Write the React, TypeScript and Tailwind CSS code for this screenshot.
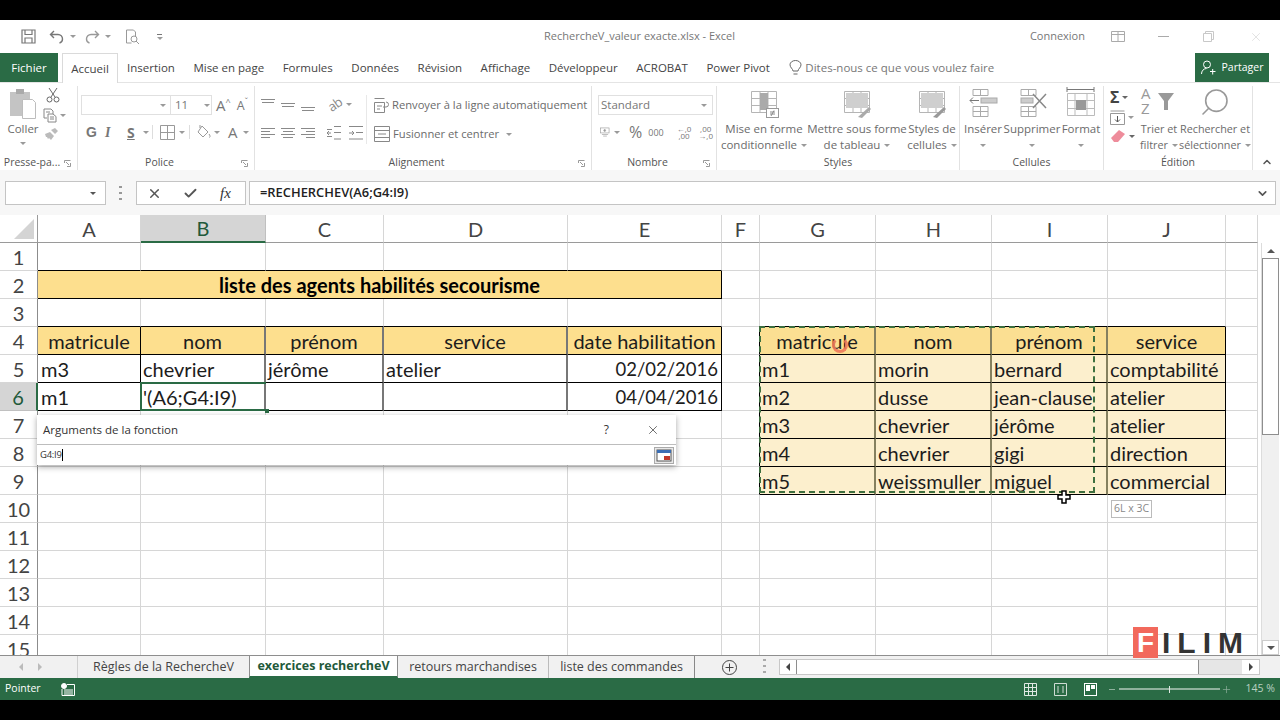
import { Check, ChevronDown, ChevronUp, Plus, Search, X } from "lucide-react";
import type { ReactNode } from "react";

const columns = ["A", "B", "C", "D", "E", "F", "G", "H", "I", "J", ""];
const rows = Array.from({ length: 15 }, (_, i) => i + 1);

const cells: Record<string, string> = {
  "4-0": "matricule", "4-1": "nom", "4-2": "prénom", "4-3": "service", "4-4": "date habilitation",
  "5-0": "m3", "5-1": "chevrier", "5-2": "jérôme", "5-3": "atelier", "5-4": "02/02/2016",
  "6-0": "m1", "6-1": "'(A6;G4:I9)", "6-4": "04/04/2016",
  "4-6": "matricule", "4-7": "nom", "4-8": "prénom", "4-9": "service",
  "5-6": "m1", "5-7": "morin", "5-8": "bernard", "5-9": "comptabilité",
  "6-6": "m2", "6-7": "dusse", "6-8": "jean-clause", "6-9": "atelier",
  "7-6": "m3", "7-7": "chevrier", "7-8": "jérôme", "7-9": "atelier",
  "8-6": "m4", "8-7": "chevrier", "8-8": "gigi", "8-9": "direction",
  "9-6": "m5", "9-7": "weissmuller", "9-8": "miguel", "9-9": "commercial",
};

const ribbonTabs = ["Insertion", "Mise en page", "Formules", "Données", "Révision", "Affichage", "Développeur", "ACROBAT", "Power Pivot"];

function Icon({ w, h, children, className }: { w: number; h: number; children: ReactNode; className?: string }) {
  return (
    <svg width={w} height={h} viewBox={`0 0 ${w} ${h}`} fill="none" stroke="#8a8a8a" strokeWidth={1} className={className}>
      {children}
    </svg>
  );
}

function Caret({ className = "" }: { className?: string }) {
  return <span className={`inline-block w-0 h-0 border-x-[3px] border-x-transparent border-t-[3px] border-t-[#9a9a9a] ${className}`} />;
}

function Lines({ kind }: { kind: "top" | "middle" | "bottom" | "left" | "center" | "right" }) {
  if (kind === "top" || kind === "middle" || kind === "bottom") {
    const y = kind === "top" ? 2 : kind === "middle" ? 6 : 10;
    return (
      <Icon w={14} h={14}>
        <path d={`M0 ${y + 0.5}h14M1 ${y + 3.5}h12`} />
      </Icon>
    );
  }
  const short = kind === "left" ? "M0 5.5h9M0 11.5h9" : kind === "center" ? "M2 5.5h10M2 11.5h10" : "M5 5.5h9M5 11.5h9";
  return (
    <Icon w={14} h={14}>
      <path d={`M0 2.5h14M0 8.5h14${short}`} />
    </Icon>
  );
}

function BigButton({ lines, width, icon, caretOnly, small }: { lines: string[]; width: string; icon: ReactNode; caretOnly?: boolean; small?: boolean }) {
  return (
    <div className={`flex flex-col items-center ${width}`}>
      <div className="h-[32px] flex items-end">{icon}</div>
      <div className={`mt-[3px] ${small ? "text-[10.8px]" : "text-[11.5px]"} leading-[16px] text-[#6b6b6b] text-center whitespace-nowrap`}>
        <div>{lines[0]}</div>
        <div className="flex items-center justify-center gap-1 h-4">
          {lines[1]}
          {(lines[1] || caretOnly) && <Caret />}
        </div>
      </div>
    </div>
  );
}

function Group({ label, width, launcher, children }: { label: string; width: string; launcher?: boolean; children: ReactNode }) {
  return (
    <div className={`${width} shrink-0 h-[84px] border-r border-[#e2e2e2] flex flex-col`}>
      <div className="flex-1 min-h-0">{children}</div>
      <div className="h-[14px] flex items-center text-[10.5px] text-[#555]">
        <span className="flex-1 text-center whitespace-nowrap">{label}</span>
        {launcher && (
          <svg width="7" height="7" viewBox="0 0 7 7" fill="none" stroke="#999" className="mr-[6px]">
            <path d="M0.5 3V0.5H6.5M6.5 3v3.5H3M2 2l3 3" />
          </svg>
        )}
      </div>
    </div>
  );
}

function TableIcon({ fill, deco }: { fill?: boolean; deco?: ReactNode }) {
  return (
    <Icon w={30} h={30}>
      <path d="M2.5 3.5h25v21h-25zM2.5 10.5h25M2.5 17.5h25M11 3.5v21M19 3.5v21" stroke="#b5b5b5" />
      {fill && <rect x="4" y="5" width="22" height="15" fill="#cfcfcf" stroke="none" />}
      {deco}
    </Icon>
  );
}

function cellClass(r: number, c: number) {
  let right = "border-r border-r-[#d6d6d6]";
  let bottom = "border-b border-b-[#d6d6d6]";
  let fill = "";
  if (r >= 4 && r <= 6 && c <= 4) {
    right = c === 0 || c === 4 ? "border-r border-r-black" : "border-r-2 border-r-[#777]";
  }
  if (r >= 3 && r <= 6 && c <= 4) bottom = "border-b border-b-black";
  if (r >= 4 && r <= 9 && c === 5) right = "border-r border-r-black";
  if (r >= 4 && r <= 9 && c >= 6 && c <= 8) right = "border-r-2 border-r-[#85805f]";
  if (r >= 4 && r <= 9 && c === 9) right = "border-r border-r-black";
  if (r >= 3 && r <= 9 && c >= 6 && c <= 9) bottom = "border-b border-b-black";
  if (r === 1 && c <= 4) bottom = "border-b border-b-black";
  if (r === 4 && c <= 4) fill = "bg-[#fddf8e]";
  if (r === 4 && c >= 6 && c <= 9) fill = "bg-[#fbdf92]";
  if (r >= 5 && r <= 9 && c >= 6 && c <= 9) fill = "bg-[#fcefcd]";
  return `${right} ${bottom} ${fill}`;
}

function Sheet() {
  return (
    <div className="w-[1258px] h-[440px] overflow-hidden bg-white font-['Lato',sans-serif]">
      <div className="grid grid-cols-[38px_103px_125px_118px_184px_154px_38px_116px_116px_116px_118px_32px] auto-rows-[28px] text-[20px] text-[#1c1c1c]">
        <div className="border-r border-b border-[#9a9a9a] relative bg-white">
          <span className="absolute right-[3px] bottom-[3px] w-0 h-0 border-l-[20px] border-l-transparent border-b-[20px] border-b-[#d4d4d4]" />
        </div>
        {columns.map((name, i) => (
          <div
            key={i}
            className={
              i === 1
                ? "flex items-center justify-center bg-[#d5d5d5] border-r border-r-[#c0c0c0] border-b-2 border-b-[#2a6b45] text-[#22593a]"
                : "flex items-center justify-center bg-white border-r border-r-[#d6d6d6] border-b border-b-[#9a9a9a] text-[#444]"
            }
          >
            {name}
          </div>
        ))}
        {rows.map((r) => (
          <div key={r} className="contents">
            <div
              className={
                r === 6
                  ? "flex items-center justify-center bg-[#d5d5d5] border-r-2 border-r-[#2a6b45] border-b border-b-[#c0c0c0] text-[#22593a]"
                  : "flex items-center justify-center border-r border-r-[#8c8c8c] border-b border-b-[#d6d6d6] text-[#444]"
              }
            >
              {r}
            </div>
            {r === 2 ? (
              <>
                <div className="col-span-5 flex items-center justify-center bg-[#fddf8e] border-r border-r-black border-b border-b-black font-bold text-black">
                  liste des agents habilités secourisme
                </div>
                {columns.slice(5).map((_, i) => (
                  <div key={i} className={cellClass(r, i + 5)} />
                ))}
              </>
            ) : (
              columns.map((_, c) => {
                const text = cells[`${r}-${c}`];
                const isDate = !!text && text.endsWith("/2016");
                const align =
                  r === 4
                    ? "justify-center"
                    : isDate
                      ? "justify-end pr-[3px] pt-[2px] text-[18.5px]"
                      : c === 0
                        ? "justify-start pl-[3px]"
                        : "justify-start pl-[2px]";
                return (
                  <div key={c} className={`flex items-center whitespace-nowrap overflow-hidden ${align} ${cellClass(r, c)}`}>
                    {text}
                  </div>
                );
              })
            )}
          </div>
        ))}
      </div>
    </div>
  );
}

export default function App() {
  return (
    <div className="relative w-[1280px] h-[720px] overflow-hidden bg-black flex flex-col font-['Open_Sans',sans-serif]">
      <div className="h-5 shrink-0" />

      {/* title bar */}
      <div className="h-[33px] shrink-0 bg-white flex items-center relative text-[11px] text-[#777]">
        <div className="flex items-center ml-[21px]">
          <svg width="15" height="15" viewBox="0 0 15 15" fill="none" stroke="#777" strokeWidth="1.2">
            <path d="M1 1h13v13H1zM4 1v4.5h7V1M4 14V9h7v5" />
          </svg>
          <svg width="16" height="14" viewBox="0 0 16 14" fill="none" stroke="#777" strokeWidth="1.4" className="ml-[13px]">
            <path d="M5 1L1.5 4.5 5 8M2 4.5h7a4.5 4.5 0 0 1 4.5 4.5c0 2-1 3.5-3 4" />
          </svg>
          <Caret className="ml-[5px]" />
          <svg width="16" height="14" viewBox="0 0 16 14" fill="none" stroke="#999" strokeWidth="1.4" className="ml-[8px]">
            <path d="M11 1l3.5 3.5L11 8M14 4.5H7A4.5 4.5 0 0 0 2.5 9c0 2 1 3.5 3 4" />
          </svg>
          <Caret className="ml-[5px]" />
          <svg width="15" height="16" viewBox="0 0 15 16" fill="none" stroke="#999" className="ml-[14px]">
            <path d="M1.5 1h7l2 2v4M1.5 1v13h5" />
            <circle cx="9" cy="10" r="3" />
            <path d="M11 12l3 3" />
          </svg>
          <span className="ml-[17px] w-[5px] border-t border-[#777] pt-[2px] flex justify-center">
            <Caret />
          </span>
        </div>
        <span className="absolute left-[544px] whitespace-nowrap">RechercheV_valeur exacte.xlsx - Excel</span>
        <div className="ml-auto flex items-center">
          <span>Connexion</span>
          <svg width="14" height="11" viewBox="0 0 14 11" fill="none" stroke="#aaa" className="ml-[26px]">
            <path d="M.5.5h13v10H.5zM.5 3.5h13M7 .5v10" />
          </svg>
          <span className="ml-[33px] w-[11px] h-px bg-[#aaa]" />
          <svg width="11" height="11" viewBox="0 0 11 11" fill="none" stroke="#c8c8c8" className="ml-[34px]">
            <path d="M.5 2.5h8v8h-8zM2.5 2.5v-2h8v8h-2" />
          </svg>
          <X size={14} strokeWidth={1} color="#cfcfcf" className="ml-[35px] mr-[17px]" />
        </div>
      </div>

      {/* ribbon tabs */}
      <div className="h-[30px] shrink-0 bg-white flex items-stretch text-[11.5px] text-[#444] border-b border-[#e4e4e4]">
        <div className="w-[58px] bg-[#2a6b45] text-white flex items-center justify-center">Fichier</div>
        <div className="ml-1 w-[56px] bg-white border-x border-t border-[#dadada] flex items-center justify-center h-[30px]">Accueil</div>
        <div className="flex items-center gap-[18.5px] ml-[9px] whitespace-nowrap pt-px">
          {ribbonTabs.map((t) => (
            <span key={t}>{t}</span>
          ))}
          <span className="flex items-center gap-[3px] text-[#777]">
            <svg width="13" height="16" viewBox="0 0 13 16" fill="none" stroke="#666" className="ml-[1px]">
              <path d="M4 11c0-2-3-3.500-3-6.200a5.500 4.300 0 0 1 11 0C12 7.500 9 9 9 11zM4.500 14h4" />
            </svg>
            Dites-nous ce que vous voulez faire
          </span>
        </div>
        <div className="ml-auto mr-[11px] w-[74px] bg-[#2a6b45] text-white text-[10.5px] flex items-center justify-center gap-[6px] h-[29px]">
          <svg width="15" height="15" viewBox="0 0 15 15" fill="none" stroke="#fff">
            <circle cx="6" cy="4.500" r="3.500" />
            <path d="M.5 14c0-3 2-5.500 5-5.500M9 11.500h5.500M11.700 9v5.500" />
          </svg>
          Partager
        </div>
      </div>

      {/* ribbon */}
      <div className="h-[87px] shrink-0 bg-white flex pt-[3px]">
        <Group label="Presse-pa..." width="w-[78px]" launcher>
          <div className="flex pl-[8px] pt-[2px]">
            <div className="w-[30px] flex flex-col items-center">
              <svg width="28" height="32" viewBox="0 0 28 32" fill="none">
                <rect x="1" y="4" width="20" height="24" fill="#c4c4c4" />
                <rect x="7" y="1" width="8" height="5" fill="#aaa" />
                <path d="M13.500 11.500h10l3 3v16h-13z" fill="#fff" stroke="#bdbdbd" />
              </svg>
              <span className="text-[11.5px] leading-[16px] text-[#6b6b6b] mt-[1px]">Coller</span>
              <Caret className="mt-[5px]" />
            </div>
            <div className="ml-[5px] flex flex-col items-start gap-[5px]">
              <svg width="14" height="15" viewBox="0 0 14 15" fill="none" stroke="#666" className="ml-[3px]">
                <path d="M3 0l6 9M11 0L5 9" />
                <circle cx="3.500" cy="11.500" r="2.500" />
                <circle cx="10.500" cy="11.500" r="2.500" />
              </svg>
              <span className="flex items-center gap-[2px]">
                <svg width="14" height="15" viewBox="0 0 14 15" fill="none" stroke="#888">
                  <path d="M1 1h7l2 2v3M1 1v9h3M5 6h5l3 2.500V14H5zM3 4h4M7 9h4M7 11h4" />
                </svg>
                <Caret className="ml-[1px]" />
              </span>
              <svg width="14" height="12" viewBox="0 0 14 12" className="ml-[1px]">
                <path d="M7 2l4-2 3 3-3 3zM1 6l5-2 4 4-3 4-2-2-1 1-1-2-1 0z" fill="#bbb" />
              </svg>
            </div>
          </div>
        </Group>

        <Group label="Police" width="w-[177px]" launcher>
          <div className="pl-[3px] pt-[9px]">
            <div className="flex items-center">
              <div className="w-[90px] h-[20px] border border-[#e0e0e0] flex items-center justify-end pr-1">
                <Caret />
              </div>
              <div className="w-[41px] h-[20px] border border-l-0 border-[#e0e0e0] flex items-center pl-1 text-[11.5px] text-[#777]">
                11
                <Caret className="ml-auto mr-[1px]" />
              </div>
              <span className="ml-[4px] text-[15px] leading-none text-[#777]">A</span>
              <span className="text-[9px] leading-none text-[#777] mb-2">^</span>
              <span className="ml-[6px] text-[12.500px] leading-none text-[#777] mt-[2px]">A</span>
              <span className="text-[9px] leading-none text-[#777] mb-2">ˇ</span>
            </div>
            <div className="flex items-center mt-[9px] text-[#777] text-[14px] h-4">
              <span className="ml-[5px] w-[19px] font-bold font-['Liberation_Sans',sans-serif]">G</span>
              <span className="w-[22px] italic font-bold font-['Liberation_Serif',serif]">I</span>
              <span className="w-[14px] font-bold underline">S</span>
              <Caret className="ml-[2px]" />
              <span className="ml-[3px] w-px h-[14px] bg-[#ddd]" />
              <svg width="15" height="15" viewBox="0 0 15 15" fill="none" stroke="#999" className="ml-[7px]">
                <path d="M.5.500h14v14H.5zM7.500.500v14M.5 7.500h14" />
              </svg>
              <Caret className="ml-[4px]" />
              <span className="ml-[4px] w-px h-[14px] bg-[#ddd]" />
              <svg width="14" height="14" viewBox="0 0 14 14" fill="none" stroke="#999" className="ml-[7px]">
                <path d="M5 1l6 6-5 5-5-5zM3 3V0M12 9c1 1.500 1.500 2.500.5 3.500" />
              </svg>
              <Caret className="ml-[3px]" />
              <span className="ml-[8px] text-[15px] leading-none">A</span>
              <Caret className="ml-[5px]" />
            </div>
          </div>
        </Group>

        <Group label="Alignement" width="w-[337px]" launcher>
          <div className="flex pt-[9px] pl-[6px]">
            <div className="flex flex-col gap-[11px]">
              <div className="flex gap-[6px] items-center h-[18px]">
                <Lines kind="top" />
                <Lines kind="middle" />
                <Lines kind="bottom" />
                <span className="ml-[7px] text-[13px] leading-none text-[#888] rotate-[-35deg] tracking-tighter">ab</span>
                <Caret className="ml-[-2px]" />
              </div>
              <div className="flex gap-[6px] items-center h-[18px]">
                <Lines kind="left" />
                <Lines kind="center" />
                <Lines kind="right" />
                <svg width="36" height="14" viewBox="0 0 36 14" fill="none" stroke="#888" className="ml-[6px]">
                  <path d="M0 3.500h5M0 10.500h5M7 .5h7M7 6.500h7M7 13h7M4 7H0M2 5L0 7l2 2" />
                  <path d="M22 .5h14M29 6.500h7M22 13h14M22 7h5M25 5l2 2-2 2" />
                </svg>
              </div>
            </div>
            <div className="ml-[3px] border-l border-[#e8e8e8] pl-[7px] flex flex-col gap-[9px] text-[11.2px] text-[#6b6b6b] whitespace-nowrap">
              <div className="flex items-center gap-[3px] h-[20px]">
                <svg width="15" height="15" viewBox="0 0 15 15" fill="none" stroke="#888">
                  <path d="M.5.5h10M.5 4.500h10v10H.5zM3 8h5M3 11h3M9 9h3a2 2 0 0 0 0-5" />
                </svg>
                Renvoyer à la ligne automatiquement
              </div>
              <div className="flex items-center gap-[3px] h-[20px]">
                <svg width="16" height="16" viewBox="0 0 16 16" fill="none" stroke="#888">
                  <path d="M.5.500h15v15H.5zM.5 4.500h15M.5 11.500h15M4 8h8" />
                </svg>
                Fusionner et centrer
                <Caret className="ml-[4px]" />
              </div>
            </div>
          </div>
        </Group>

        <Group label="Nombre" width="w-[125px]" launcher>
          <div className="pl-[6px] pt-[9px] pr-[3px]">
            <div className="h-[20px] border border-[#e0e0e0] flex items-center pl-[2px] pr-[5px] text-[11.5px] text-[#777]">
              Standard
              <Caret className="ml-auto" />
            </div>
            <div className="flex items-center mt-[7px] text-[#777] h-5">
              <svg width="16" height="16" viewBox="0 0 16 16" fill="none" stroke="#999" className="ml-[2px]">
                <rect x=".5" y="1.500" width="14" height="8" />
                <circle cx="7.500" cy="5.500" r="1.500" fill="#999" />
                <path d="M3 12h10M5 14.500h6" />
              </svg>
              <Caret className="ml-[4px]" />
              <span className="ml-[9px] text-[16px] leading-none">%</span>
              <span className="ml-[6px] text-[9px] leading-none">000</span>
              <span className="ml-[13px] text-[8px] leading-[7px] text-center">←,0<br />,00</span>
              <span className="ml-[7px] text-[8px] leading-[7px] text-center">,00<br />→,0</span>
            </div>
          </div>
        </Group>

        <Group label="Styles" width="w-[243px]">
          <div className="flex">
            <BigButton
              width="w-[94px] shrink-0"
              lines={["Mise en forme", "conditionnelle"]}
              icon={<TableIcon deco={<><rect x="11" y="5" width="8" height="17" fill="#aaa" stroke="none" /><rect x="17.500" y="20.500" width="12" height="9" fill="#fff" stroke="#999" /><path d="M21 24h5M21 26h5M25 22.500l-3 5.500" /></>} />}
            />
            <BigButton
              width="w-[92px] shrink-0"
              lines={["Mettre sous forme", "de tableau"]}
              icon={<TableIcon fill deco={<path d="M16 29l11-10 2 2-9 9z" fill="#aaa" stroke="none" />} />}
            />
            <BigButton
              width="w-[58px] shrink-0"
              lines={["Styles de", "cellules"]}
              icon={<TableIcon fill deco={<path d="M16 29l11-10 2 2-9 9z" fill="#999" stroke="none" />} />}
            />
          </div>
        </Group>

        <Group label="Cellules" width="w-[144px]">
          <div className="flex pl-[3px]">
            <BigButton
              width="w-[40px] shrink-0"
              caretOnly
              lines={["Insérer", ""]}
              icon={
                <Icon w={30} h={30}>
                  <path d="M5 1.500h15v6H5zM12.500 1.500v6M5 18.500h15v10H5zM5 23.500h15M12.500 18.500v10" stroke="#aaa" />
                  <rect x="13" y="10" width="16" height="5" fill="#ccc" stroke="#aaa" />
                  <path d="M2 12.500h9M5 9.500l-3 3 3 3" stroke="#777" />
                </Icon>
              }
            />
            <BigButton
              width="w-[58px] shrink-0"
              caretOnly
              lines={["Supprimer", ""]}
              icon={
                <Icon w={32} h={30}>
                  <path d="M5 1.500h15v6H5zM12.500 1.500v6M5 18.500h15v10H5zM5 23.500h15M12.500 18.500v10" stroke="#aaa" />
                  <rect x="5" y="10" width="12" height="5" fill="#ccc" stroke="#aaa" />
                  <path d="M17 6l13 14M30 6L17 20" stroke="#888" strokeWidth="1.500" />
                </Icon>
              }
            />
            <BigButton
              width="w-[40px] shrink-0"
              caretOnly
              lines={["Format", ""]}
              icon={
                <Icon w={30} h={32}>
                  <path d="M1 3.500h27M1 1v5M28 1v5M4 3.500h3M22 3.500h3" stroke="#777" />
                  <path d="M1.500 7.500h27v22h-27zM1.500 14.500h27M1.500 22.500h27M9 7.500v22M21 7.500v22" stroke="#bbb" />
                  <rect x="10" y="14" width="10" height="10" fill="#999" stroke="none" />
                </Icon>
              }
            />
          </div>
        </Group>

        <Group label="Édition" width="w-[149px]">
          <div className="flex pl-[6px]">
            <div className="flex flex-col items-start w-[27px] pt-[3px] gap-[4px]">
              <span className="flex items-center gap-[3px] text-[16px] leading-[17px] text-[#444] font-bold">
                Σ<Caret className="border-t-[#666]" />
              </span>
              <span className="flex items-center gap-[3px]">
                <svg width="15" height="15" viewBox="0 0 15 15" fill="none" stroke="#999">
                  <path d="M.5 1h14M.5 3.500h14v11H.5z" />
                  <path d="M7.500 6v6M5 9.500l2.500 2.500L10 9.500" stroke="#555" />
                </svg>
                <Caret />
              </span>
              <span className="flex items-center gap-[3px]">
                <svg width="16" height="14" viewBox="0 0 16 14">
                  <path d="M1 9l8-8 6 4-7 8H4z" fill="#ee8c9b" />
                </svg>
                <Caret className="border-t-[#666]" />
              </span>
            </div>
            <BigButton
              small
              width="w-[44px] shrink-0"
              lines={["Trier et", "filtrer"]}
              icon={
                <div className="w-[36px] h-[32px] flex items-start text-[#999] text-[15px] leading-[15px]">
                  <div className="flex flex-col">
                    <span>A</span>
                    <span>Z</span>
                  </div>
                  <svg width="16" height="18" viewBox="0 0 16 18" className="mt-[7px] ml-[7px]">
                    <path d="M0 0h16L10 8v9H6V8z" fill="#999" />
                  </svg>
                </div>
              }
            />
            <BigButton
              small
              width="w-[68px] shrink-0"
              lines={["Rechercher et", "sélectionner"]}
              icon={<Search size={32} strokeWidth={1.2} color="#999" className="-scale-x-100" />}
            />
          </div>
        </Group>

        <div className="flex-1 flex items-end justify-center pb-[2px]">
          <ChevronUp size={12} strokeWidth={3} color="#555" />
        </div>
      </div>

      {/* formula bar */}
      <div className="h-[45px] shrink-0 bg-[#f7f7f7] pt-[11px] flex items-start">
        <div className="ml-[5px] w-[101px] h-[24px] bg-white border border-[#c4c4c4] flex items-center justify-end pr-[9px]">
          <Caret className="border-t-[#555]" />
        </div>
        <div className="ml-[13px] w-[3px] h-[14px] mt-[5px] flex flex-col justify-between">
          <span className="h-[2px] bg-[#999]" />
          <span className="h-[2px] bg-[#999]" />
          <span className="h-[2px] bg-[#999]" />
        </div>
        <div className="ml-[14px] w-[110px] h-[24px] bg-white border border-[#c4c4c4] flex items-center text-[#555]">
          <X size={15} strokeWidth={2.4} className="ml-[10px]" />
          <Check size={15} strokeWidth={3} className="ml-[21px]" />
          <span className="ml-[22px] italic font-['Liberation_Serif',serif] text-[15px] leading-none text-[#333]">fx</span>
        </div>
        <div className="ml-[3px] w-[1027px] h-[24px] bg-white border border-[#c4c4c4] flex items-center pl-[10px] pr-[6px] text-[12.9px] font-semibold text-[#222]">
          =RECHERCHEV(A6;G4:I9)
          <ChevronDown size={13} strokeWidth={3} color="#555" className="ml-auto" />
        </div>
      </div>

      {/* sheet + vertical scrollbar */}
      <div className="h-[440px] shrink-0 flex bg-white">
        <Sheet />
        <div className="flex-1 flex flex-col pt-[28px]">
          <div className="flex-1 ml-[3px] mr-[1px] bg-[#f0f0f0] flex flex-col border-l border-[#dcdcdc]">
            <div className="h-[15px] bg-white flex items-center justify-center">
              <span className="w-0 h-0 border-x-[4px] border-x-transparent border-b-[4px] border-b-[#555]" />
            </div>
            <div className="h-[177px] bg-white border border-[#8e8e8e]" />
            <div className="flex-1" />
            <div className="h-[15px] bg-white border border-[#ccc] flex items-center justify-center">
              <span className="w-0 h-0 border-x-[4px] border-x-transparent border-t-[4px] border-t-[#555]" />
            </div>
          </div>
        </div>
      </div>

      {/* sheet tabs */}
      <div className="h-[23px] shrink-0 bg-[#f1f1f1] border-t border-[#8e8e8e] flex items-stretch text-[12.500px] text-[#444] whitespace-nowrap">
        <div className="w-[78px] flex items-center pl-[19px] gap-[15px] border-r border-[#d0d0d0]">
          <span className="w-0 h-0 border-y-[4px] border-y-transparent border-r-[4px] border-r-[#bbb]" />
          <span className="w-0 h-0 border-y-[4px] border-y-transparent border-l-[4px] border-l-[#bbb]" />
        </div>
        <div className="w-[171px] flex items-center justify-center">Règles de la RechercheV</div>
        <div className="w-[149px] flex items-center justify-center bg-white border-x border-[#8e8e8e] border-b-2 border-b-[#2a6b45] font-bold text-[#22593a]">
          exercices rechercheV
        </div>
        <div className="w-[151px] flex items-center justify-center border-r border-[#bbb]">retours marchandises</div>
        <div className="w-[146px] flex items-center justify-center border-r border-[#888]">liste des commandes</div>
        <div className="w-[68px] flex items-center justify-center">
          <svg width="15" height="15" viewBox="0 0 15 15" fill="none" stroke="#444">
            <circle cx="7.500" cy="7.500" r="7" />
            <path d="M7.500 3.500v8M3.500 7.500h8" />
          </svg>
        </div>
        <div className="w-[3px] h-[14px] mt-[3px] flex flex-col justify-between">
          <span className="h-[2px] bg-[#aaa]" />
          <span className="h-[2px] bg-[#aaa]" />
          <span className="h-[2px] bg-[#aaa]" />
        </div>
        <div className="ml-[13px] my-[3px] w-[481px] flex bg-[#e6e6e6] border border-[#c8c8c8]">
          <div className="w-[16px] bg-white flex items-center justify-center">
            <span className="w-0 h-0 border-y-[4px] border-y-transparent border-r-[4px] border-r-[#444]" />
          </div>
          <div className="w-[403px] bg-white border-x border-[#8e8e8e]" />
          <div className="flex-1" />
          <div className="w-[17px] bg-white flex items-center justify-center">
            <span className="w-0 h-0 border-y-[4px] border-y-transparent border-l-[4px] border-l-[#444]" />
          </div>
        </div>
      </div>

      {/* status bar */}
      <div className="h-[22px] shrink-0 bg-[#2a6b45] flex items-center text-[10.5px] text-white">
        <span className="ml-[5px]">Pointer</span>
        <svg width="14" height="13" viewBox="0 0 14 13" fill="none" stroke="#fff" className="ml-[20px]">
          <circle cx="3" cy="3" r="2.500" fill="#fff" />
          <path d="M6 1.500h7.500V12.500H1V6M3 7h9M3 9h9M3 11h9" />
        </svg>
        <div className="ml-auto flex items-center">
          <svg width="13" height="13" viewBox="0 0 13 13" fill="none" stroke="#dfe9e3">
            <path d="M.5.500h12v12H.5zM4.500.500v12M8.500.500v12M.5 4.500h12M.5 8.500h12" />
          </svg>
          <svg width="13" height="13" viewBox="0 0 13 13" fill="none" stroke="#cfdcd4" className="ml-[17px]">
            <path d="M.5.500h12v12H.5zM4 3v7M9 3v7" />
          </svg>
          <svg width="13" height="13" viewBox="0 0 13 13" className="ml-[17px]">
            <rect x=".5" y=".5" width="12" height="12" fill="none" stroke="#fff" />
            <path d="M2 2h4v6H2zM7 2h4v4H7z" fill="#fff" />
          </svg>
          <span className="ml-[12px] w-[6px] h-px bg-[#8fb19d]" />
          <div className="ml-[4px] w-[101px] h-[2px] bg-[#8fb19d] flex justify-center items-center">
            <span className="w-px h-[7px] bg-[#dfe9e3]" />
          </div>
          <Plus size={11} strokeWidth={1.5} color="#8fb19d" className="ml-[1px]" />
          <span className="ml-[14px] mr-[5px] text-[#b9d0c2]">145 %</span>
        </div>
      </div>
      <div className="h-5 shrink-0" />

      {/* things that lie over the sheet */}
      <div className="absolute left-[265px] top-[409px] w-[4px] h-[4px] bg-[#2a6b45]" />
      <div className="absolute left-[140px] top-[382px] w-[126px] h-[29px] border-2 border-[#2a6b45] border-r-0" />
      <div className="absolute left-[759px] top-[326px] w-[336px] h-[167px] border-2 border-dashed border-[#3d6f3f]" />
      <div className="absolute left-[832px] top-[337px] w-[16px] h-[16px] rounded-full border-[3px] border-[#ee7a5a] border-t-transparent opacity-90" />

      <div className="absolute left-[37px] top-[415px] w-[639px] h-[50px] bg-white shadow-[0_2px_6px_rgba(0,0,0,0.35)] flex flex-col">
        <div className="h-[30px] border-b border-[#bdbdbd] flex items-center pl-[6px] text-[11.500px] text-[#333]">
          Arguments de la fonction
          <span className="ml-auto text-[12px]">?</span>
          <X size={14} strokeWidth={1.2} className="ml-[37px] mr-[16px]" />
        </div>
        <div className="flex-1 flex items-center pl-[3px] pr-[2px] text-[9.500px] text-[#333] tracking-tight">
          G4:I9
          <span className="w-px h-[12px] bg-black" />
          <div className="ml-auto w-[20px] h-[17px] bg-[#e8e8e8] border border-[#aaa] flex items-center justify-center">
            <svg width="16" height="13" viewBox="0 0 16 13">
              <rect x="1" y="1" width="14" height="11" fill="#fff" stroke="#555" />
              <rect x="1" y="1" width="14" height="3" fill="#3c6eb4" />
              <rect x="8" y="7" width="6" height="4" fill="#c0392b" />
            </svg>
          </div>
        </div>
      </div>

      <svg width="14" height="14" viewBox="0 0 14 14" className="absolute left-[1057px] top-[490px]">
        <path d="M5 1h4v4h4v4H9v4H5V9H1V5h4z" fill="#fff" stroke="#000" strokeWidth="1.500" />
      </svg>

      <div className="absolute left-[1111px] top-[500px] w-[41px] h-[18px] bg-white border border-[#bbb] flex items-center justify-center text-[10.500px] text-[#888]">
        6L x 3C
      </div>

      <div className="absolute left-[1133px] top-[627px] flex items-stretch h-[31px] font-['Liberation_Sans',sans-serif] font-bold leading-[31px]">
        <span className="w-[25px] bg-[#f2695c] text-white text-center text-[28px]">F</span>
        <span className="ml-[4px] text-[#333] tracking-[7px] text-[30px]">ILIM</span>
      </div>
    </div>
  );
}
